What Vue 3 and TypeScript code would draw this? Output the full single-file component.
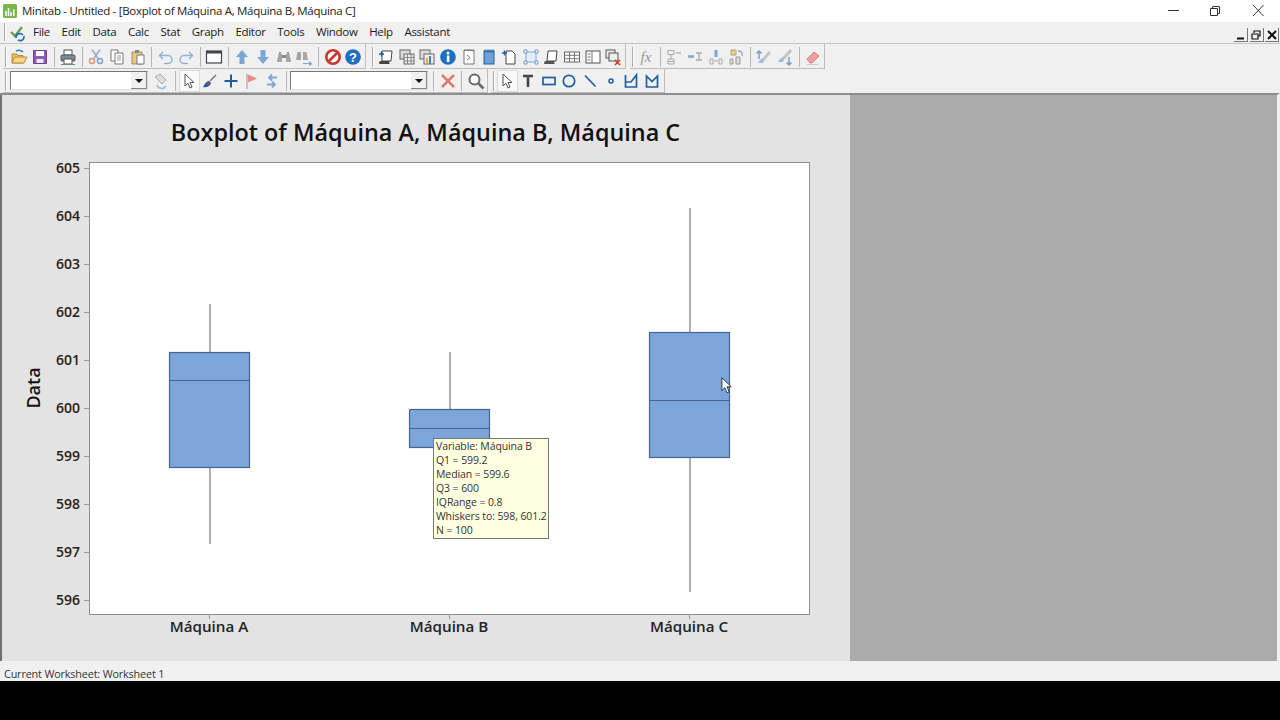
<template>
  <div class="app">
    <!-- Window title -->
    <header class="titlebar">
      <svg class="app-logo" width="14" height="14" viewBox="0 0 14 14">
        <rect width="14" height="14" rx="1.5" fill="#7ab648" />
        <path d="M3 12V7M5.5 12V4M8 12V8M10.8 12V5.5" stroke="#fff" stroke-width="1.5" />
      </svg>
      <span class="title-text">Minitab - Untitled - [Boxplot of Máquina A, Máquina B, Máquina C]</span>
      <div class="win-controls">
        <svg class="win-btn" viewBox="0 0 42 22"><path d="M15 10.500h11" stroke="#333" /></svg>
        <svg class="win-btn" viewBox="0 0 42 22"><path d="M15.500 8.500h7v7h-7zM17.500 8.500v-2h7v7h-2" fill="none" stroke="#333" /></svg>
        <svg class="win-btn" viewBox="0 0 42 22"><path d="M16 5l10.500 11M26.500 5L16 16" stroke="#333" /></svg>
      </div>
    </header>

    <!-- Menu bar -->
    <nav class="menubar">
      <span class="grip menu-grip"></span>
      <svg class="menu-logo" width="18" height="18" viewBox="0 0 18 18">
        <path d="M2 8l4 4 7-9" fill="none" stroke="#5d9e4e" stroke-width="2.2" />
        <path d="M7 14a4 4 0 0 1 7-3M15 12a4 4 0 0 1-6 4" fill="none" stroke="#2a6fb5" stroke-width="1.8" />
      </svg>
      <span v-for="m in menus" :key="m" class="menu-item">{{ m }}</span>
      <div class="mdi-controls">
        <span class="mdi-btn"><svg width="10" height="10" viewBox="0 0 10 10"><path d="M1 8.500h7" stroke="#111" stroke-width="2" /></svg></span>
        <span class="mdi-btn"><svg width="10" height="10" viewBox="0 0 10 10"><path d="M1 4h6v5H1zM3 3V1h6v5H7" fill="none" stroke="#111" stroke-width="1.200" /></svg></span>
        <span class="mdi-btn"><svg width="10" height="10" viewBox="0 0 10 10"><path d="M1 1l8 8M9 1L1 9" stroke="#111" stroke-width="2" /></svg></span>
      </div>
    </nav>

    <!-- Toolbars -->
    <div v-for="(row, r) in toolbars" :key="r" class="toolbar-row" :class="`row-${r}`">
      <div v-for="(group, g) in row" :key="g" class="tool-group">
        <span class="grip"></span>
        <template v-for="(item, i) in group" :key="i">
          <span v-if="item === '|'" class="sep"></span>
          <span v-else-if="item === 'combo'" class="combo"><span class="combo-arrow"></span></span>
          <span v-else class="tool" :class="{ pressed: item.endsWith('*') }">
            <svg width="18" height="18" viewBox="0 0 18 18" v-html="icons[item.replace('*', '')]"></svg>
          </span>
        </template>
      </div>
    </div>

    <!-- MDI workspace -->
    <main class="workspace">
      <section class="graph-pane">
        <svg class="chart" width="848" height="566" viewBox="2 95 848 566">
          <text class="chart-title" x="425.500" y="141" text-anchor="middle">Boxplot of Máquina A, Máquina B, Máquina C</text>
          <rect x="89.500" y="162.500" width="720" height="452" fill="#fff" stroke="#8d8d8d" />

          <g v-for="t in ticks" :key="t.label">
            <line x1="84" x2="90" :y1="t.y + 0.5" :y2="t.y + 0.5" stroke="#9a9a9a" />
            <text class="tick-label" x="80" :y="t.y + 5" text-anchor="end">{{ t.label }}</text>
          </g>
          <text class="axis-label" transform="translate(40 388) rotate(-90)" text-anchor="middle">Data</text>

          <g v-for="b in boxes" :key="b.name">
            <line :x1="b.x + 40" :x2="b.x + 40" :y1="b.whiskerTop" :y2="b.whiskerBottom" stroke="#737a84" stroke-width="1.200" />
            <rect :x="b.x - 0.5" :y="b.top + 0.5" width="80" :height="b.bottom - b.top" fill="#7ca5d9" stroke="#45658f" stroke-width="1.200" />
            <line :x1="b.x" :x2="b.x + 80" :y1="b.median + 0.5" :y2="b.median + 0.5" stroke="#45658f" stroke-width="1.200" />
            <line :x1="b.x + 39.5" :x2="b.x + 39.5" y1="614" y2="619" stroke="#9a9a9a" />
            <text class="cat-label" :x="b.x + 39" y="632" text-anchor="middle">{{ b.name }}</text>
          </g>
        </svg>

        <!-- Hover tooltip -->
        <div class="tooltip">
          <div v-for="l in tooltipLines" :key="l">{{ l }}</div>
        </div>

        <svg class="cursor" width="12" height="17" viewBox="0 0 14 20">
          <path d="M1 1v15l3.500-3.500 2.500 6 2.500-1-2.500-6h5z" fill="#fff" stroke="#222" />
        </svg>
      </section>
      <section class="mdi-empty"></section>
    </main>

    <footer class="statusbar">Current Worksheet: Worksheet 1</footer>
    <div class="blackout"></div>
  </div>
</template>

<script setup lang="ts">
const menus = ['File', 'Edit', 'Data', 'Calc', 'Stat', 'Graph', 'Editor', 'Tools', 'Window', 'Help', 'Assistant']

// '|' separator, 'combo' dropdown, trailing * means a pressed button
const toolbars: string[][][] = [
  [
    ['open', 'save', '|', 'print', '|', 'cut', 'copy', 'paste', '|', 'undo', 'redo', '|', 'window', '|', 'up', 'down', 'find', 'findnext', '|', 'stop', 'help'],
    ['session', 'grid', 'gridb', 'info', 'report', 'notebook', 'newdoc', 'nodes', 'scroll', 'table', 'panel', 'closeall'],
    ['fx', '|', 'tree1', 'tree2', 'tree3', 'tree4', '|', 'arrowa', 'arrowb', '|', 'eraser']
  ],
  [
    ['combo', 'refresh', '|', 'pointer*', 'brush', 'plus', 'flag', 'swap', '|', 'combo', '|', 'cross', '|', 'zoom'],
    ['pointer*', 'text', 'rect', 'circle', 'line', 'dot', 'poly', 'poly2']
  ]
]

const icons: Record<string, string> = {
  open: '<path d="M2 6h5l1 1.500h5V15H2z" fill="#f0c060" stroke="#b98a32"/><path d="M2 15l2.500-6H17l-3 6z" fill="#f4d58a" stroke="#b98a32"/><path d="M6 3c3-1.500 5-1 7 1" fill="none" stroke="#3a7fc0" stroke-width="1.500"/>',
  save: '<path d="M2.500 2.500h13v13h-13z" fill="#8f5fb5" stroke="#6f3f98"/><rect x="5" y="3" width="8" height="5" fill="#fff"/><rect x="5.500" y="11" width="7" height="4" fill="#efe6f5"/>',
  print: '<rect x="5" y="2" width="8" height="5" fill="#fff" stroke="#555"/><rect x="2" y="7" width="14" height="6" rx="1" fill="#7d8b94" stroke="#4e5a62"/><rect x="5" y="11" width="8" height="5" fill="#fff" stroke="#555"/><path d="M2 16.500h14" stroke="#5b9b6d"/>',
  cut: '<path d="M5 1.500l6 9M13 1.500l-6 9" stroke="#9ab0c8" stroke-width="1.600"/><circle cx="5" cy="13" r="2.500" fill="none" stroke="#d99a7a" stroke-width="1.500"/><circle cx="13" cy="13" r="2.500" fill="none" stroke="#7fa3c8" stroke-width="1.500"/>',
  copy: '<path d="M3 2h7v11H3z" fill="#fff" stroke="#777"/><path d="M7 5h8v11H7z" fill="#fff" stroke="#777"/><path d="M9 8h4M9 10h4M9 12h4" stroke="#999"/>',
  paste: '<path d="M3 4h10v12H3z" fill="#e7c88c" stroke="#a98b55"/><rect x="6" y="2" width="4" height="3" fill="#888"/><path d="M8 7h7v9H8z" fill="#fff" stroke="#777"/>',
  undo: '<path d="M6 4L2.500 7.500 6 11" fill="none" stroke="#8fb0d8" stroke-width="1.500"/><path d="M3 7.500h8a4 4 0 0 1 0 8H7" fill="none" stroke="#8fb0d8" stroke-width="1.500"/>',
  redo: '<path d="M12 4l3.500 3.500L12 11" fill="none" stroke="#8fb0d8" stroke-width="1.500"/><path d="M15 7.500H7a4 4 0 0 0 0 8h4" fill="none" stroke="#8fb0d8" stroke-width="1.500"/>',
  window: '<rect x="1.500" y="3" width="15" height="12" fill="#fff" stroke="#3f4650" stroke-width="1.200"/><rect x="1.500" y="3" width="15" height="2.500" fill="#3f4650"/>',
  up: '<path d="M9 2l6 7h-3.500v7h-5V9H3z" fill="#7ea6d3"/>',
  down: '<path d="M9 16l6-7h-3.500V2h-5v7H3z" fill="#7ea6d3"/>',
  find: '<path d="M2 14l1.500-8h3.500v8zM16 14l-1.500-8H11v8z" fill="#a5a5a5"/><rect x="7" y="7" width="4" height="3" fill="#888"/><path d="M4 4h2v2H4zM12 4h2v2h-2z" fill="#999"/>',
  findnext: '<path d="M1 12l1.500-8H6v8zM13 12l-1.500-8H8v8z" fill="#a5a5a5"/><path d="M8 15h6v-2l3.500 3-3.500 2v-2H8z" fill="#7ea6d3"/>',
  stop: '<circle cx="9" cy="9" r="6.700" fill="#fff" stroke="#c8392b" stroke-width="2.600"/><path d="M4.500 13.500l9-9" stroke="#c8392b" stroke-width="2.600"/>',
  help: '<circle cx="9" cy="9" r="7.800" fill="#1e6fc0"/><text x="9" y="13.500" font-size="13" font-weight="700" text-anchor="middle" fill="#fff" font-family="Liberation Sans, sans-serif">?</text>',
  session: '<path d="M5 3h10l-1 10H5z" fill="#fff" stroke="#444"/><path d="M2 15c0-2 2-2 3-2h8c-1 0-1 3 0 3H4c-1 0-2 0-2-1z" fill="#444"/><path d="M2 6h5M4.500 3.500v5" stroke="#1f5f9f" stroke-width="1.300"/>',
  grid: '<rect x="2" y="2" width="10" height="9" fill="#ddd" stroke="#666"/><rect x="6" y="6" width="10" height="10" fill="#eee" stroke="#666"/><path d="M6 9.500h10M6 13h10M9.500 6v10M13 6v10" stroke="#888"/>',
  gridb: '<rect x="2" y="2" width="10" height="9" fill="#ddd" stroke="#666"/><rect x="6" y="6" width="10" height="10" fill="#eee" stroke="#666"/><path d="M8 10h2v6H8z" fill="#e0a83c"/><path d="M11 8h2v8h-2z" fill="#3f7fbe"/>',
  info: '<circle cx="9" cy="9" r="7.800" fill="#1e6fc0"/><rect x="7.800" y="7.500" width="2.600" height="6.500" fill="#fff"/><circle cx="9" cy="5" r="1.500" fill="#fff"/>',
  report: '<path d="M4 2h10v14H4z" fill="#fff" stroke="#777"/><path d="M5 2v1M7 2v1M9 2v1M11 2v1M13 2v1" stroke="#444"/><path d="M7 7l3 2.500L7 12" fill="none" stroke="#777"/>',
  notebook: '<rect x="4" y="3" width="10" height="13" fill="#6f9fd6" stroke="#1f5f9f"/><path d="M5 1.500v3M7 1.500v3M9 1.500v3M11 1.500v3M13 1.500v3" stroke="#1f5f9f"/>',
  newdoc: '<path d="M5 3h6l3 3v10H5z" fill="#fff" stroke="#444"/><path d="M1 5h5M3.500 2.500v5" stroke="#1f5f9f" stroke-width="1.300"/>',
  nodes: '<rect x="4" y="4" width="10" height="10" fill="#e4eef8" stroke="#7ea6d3"/><path d="M2 2h3v3H2zM13 2h3v3h-3zM2 13h3v3H2zM13 13h3v3h-3z" fill="#fff" stroke="#6f97c8"/>',
  scroll: '<path d="M6 3h9l-1 10H5z" fill="#fff" stroke="#444"/><path d="M2 15c0-2 2-2 3-2h8c-1 0-1 3 0 3H4c-1 0-2 0-2-1z" fill="#555"/>',
  table: '<rect x="1.500" y="4" width="15" height="10" fill="#fff" stroke="#666"/><path d="M1.500 7.300h15M1.500 10.700h15M6.500 4v10M11.500 4v10" stroke="#777"/>',
  panel: '<rect x="2" y="3" width="14" height="12" fill="#fff" stroke="#555"/><path d="M8 3v12M3.500 6h3M3.500 9h3M3.500 12h3" stroke="#777"/>',
  closeall: '<rect x="2" y="2" width="9" height="8" fill="#eee" stroke="#555"/><rect x="5" y="5" width="9" height="8" fill="#eee" stroke="#555"/><path d="M11 12l5 5M16 12l-5 5" stroke="#d0352b" stroke-width="1.600"/>',
  fx: '<text x="9" y="14" font-size="15" font-style="italic" text-anchor="middle" fill="#999" font-family="Liberation Serif, serif">fx</text>',
  tree1: '<path d="M3 2.500h6v4H3zM3 11h6v5H3zM3 13.500h6M6 6.500V11" fill="none" stroke="#a9a9a9"/><path d="M11 5h5" stroke="#bcc8d6" stroke-width="2"/>',
  tree2: '<path d="M2 8.500h6" stroke="#7ea6d3" stroke-width="2.500"/><path d="M10 5h6M10 12h6M13 5v7" stroke="#aaa" stroke-width="1.300"/>',
  tree3: '<path d="M9 2v7" stroke="#7ea6d3" stroke-width="3"/><path d="M3 11h3v5H3zM12 11h3v5h-3zM7 13h4" fill="none" stroke="#aaa"/>',
  tree4: '<path d="M4 2h5v5H4z" fill="#e7cc95" stroke="#b9a06f"/><path d="M3 11h3v5H3zM9 9h4v7H9z" fill="#ddd" stroke="#999"/><path d="M11 3c3 0 5 1 4 5" fill="none" stroke="#7ea6d3" stroke-width="1.300"/>',
  arrowa: '<path d="M7 13l8-9" stroke="#c4c4c4" stroke-width="3"/><path d="M3 15c2-4 4-5 6-4l-1 4z" fill="#9fbcd8"/><path d="M4 3v8M1.500 5.500L4 3l2.500 2.500" fill="none" stroke="#6f9cc8" stroke-width="1.400"/>',
  arrowb: '<path d="M7 11l8-9" stroke="#c4c4c4" stroke-width="3"/><path d="M2 14c2-4 4-5 6-4l-1 4z" fill="#9fbcd8"/><path d="M13 9v8M10.500 14.500L13 17l2.500-2.500" fill="none" stroke="#6f9cc8" stroke-width="1.400"/>',
  eraser: '<path d="M3 11l7-7 5 4-7 7H6z" fill="#ee9f9f" stroke="#d98080"/><path d="M3 16.500h11" stroke="#ccc"/>',
  refresh: '<path d="M3 5l5-3 6 6-4 4z" fill="#ddd" stroke="#aaa"/><path d="M5 13a5 5 0 0 0 9 1" fill="none" stroke="#9fbcd8" stroke-width="1.800"/>',
  pointer: '<path d="M5 2v12l3-2.800 2 4.800 2-.9-2-4.600h4z" fill="#fff" stroke="#555"/>',
  brush: '<path d="M9 9l6-6" stroke="#777" stroke-width="1.500"/><path d="M2 15c2-4 4-6 6-6l2 2c-1 3-4 5-8 4z" fill="#1f5f9f"/><path d="M6 10l3 3" stroke="#d0352b" stroke-width="1.300"/>',
  plus: '<path d="M9 2.500v13M2.500 9h13" stroke="#1f5f9f" stroke-width="2"/>',
  flag: '<path d="M5 2v15" stroke="#b9a5a5" stroke-width="1.300"/><path d="M6 2.500l9 4-9 4z" fill="#ee8a8a"/>',
  swap: '<path d="M14 5.500H6M9 2.500L6 5.500l3 3M4 12.500h8M9 9.500l3 3-3 3" fill="none" stroke="#7ea6d3" stroke-width="1.800"/>',
  cross: '<path d="M3 3l12 12M15 3L3 15" stroke="#e07b72" stroke-width="2.600"/>',
  zoom: '<circle cx="7.500" cy="7.500" r="5" fill="#fff" stroke="#6a6a6a" stroke-width="2"/><path d="M11.500 11.500l5 5" stroke="#6a6a6a" stroke-width="2.600"/>',
  text: '<path d="M4 4h10M9 4v11" fill="none" stroke="#444" stroke-width="2.600"/>',
  rect: '<rect x="3" y="5.500" width="12" height="7" fill="none" stroke="#1f5f9f" stroke-width="1.700"/>',
  circle: '<circle cx="9" cy="9" r="5.700" fill="none" stroke="#1f5f9f" stroke-width="1.700"/>',
  line: '<path d="M4 3.500l10.500 11" stroke="#1f5f9f" stroke-width="1.700"/>',
  dot: '<circle cx="9" cy="9" r="2" fill="none" stroke="#1f5f9f" stroke-width="1.500"/>',
  poly: '<path d="M3.500 3v12h11V3L9 10H3.500" fill="none" stroke="#1f5f9f" stroke-width="1.700"/>',
  poly2: '<path d="M3.500 4v11h11V4L9 9.500z" fill="none" stroke="#1f5f9f" stroke-width="1.700"/>'
}

const ticks = [605, 604, 603, 602, 601, 600, 599, 598, 597, 596].map((label, i) => ({
  label,
  y: 168 + i * 48
}))

const boxes = [
  { name: 'Máquina A', x: 170, top: 352, bottom: 467, median: 380, whiskerTop: 304, whiskerBottom: 544 },
  { name: 'Máquina B', x: 410, top: 409, bottom: 447, median: 428, whiskerTop: 352, whiskerBottom: 500 },
  { name: 'Máquina C', x: 650, top: 332, bottom: 457, median: 400, whiskerTop: 208, whiskerBottom: 592 }
]

const tooltipLines = [
  'Variable: Máquina B',
  'Q1 = 599.2',
  'Median = 599.6',
  'Q3 = 600',
  'IQRange = 0.8',
  'Whiskers to: 598, 601.2',
  'N = 100'
]
</script>

<style>
html,
body {
  margin: 0;
  background: #000;
}
</style>

<style scoped>
.app {
  width: 1280px;
  height: 720px;
  display: flex;
  flex-direction: column;
  overflow: hidden;
  font-family: 'Open Sans', 'Noto Sans', sans-serif;
  color: #1a1a1a;
  background: #f0f0f0;
}

.titlebar {
  height: 22px;
  flex: none;
  display: flex;
  align-items: center;
  padding-left: 3px;
  background: #fff;
}

.app-logo {
  margin-right: 5px;
}

.title-text {
  font-size: 11.5px;
  letter-spacing: -0.3px;
  margin-top: -1px;
  color: #222;
}

.win-controls {
  margin-left: auto;
  display: flex;
  margin-right: 1px;
}

.win-btn {
  width: 42px;
  height: 22px;
}

.menubar {
  height: 22px;
  flex: none;
  display: flex;
  align-items: center;
  padding-left: 4px;
  box-sizing: border-box;
  border-bottom: 1px solid #c4c4c4;
  font-size: 11.5px;
  letter-spacing: -0.3px;
}

.menu-logo {
  margin: 0 6px 0 3px;
}

.menu-item {
  margin: -2px 11.6px 0 0;
}

.mdi-controls {
  margin: 5px 1px 0 auto;
  display: flex;
  gap: 1.500px;
}

.mdi-btn {
  width: 14px;
  height: 14px;
  display: flex;
  align-items: center;
  justify-content: center;
  background: #f0f0f0;
  border-right: 1px solid #777;
  border-bottom: 1px solid #777;
  box-sizing: border-box;
}

.toolbar-row {
  flex: none;
  display: flex;
  align-items: stretch;
  background: #f0f0f0;
  padding-left: 3px;
}

.row-0 {
  height: 25px;
}

.row-1 {
  height: 24px;
}

.tool-group {
  display: flex;
  align-items: center;
  padding-right: 1px;
  border-right: 1px solid #bdbdbd;
  border-bottom: 1px solid #bdbdbd;
}

.row-0 .tool-group {
  padding-top: 1px;
}

.tool-group + .tool-group {
  margin-left: 4px;
}

.row-1 .tool-group + .tool-group {
  margin-left: 3px;
}

.grip {
  width: 2px;
  height: 20px;
  margin: 0 2px;
  background: #fdfdfd;
  border-left: 1px solid #aaa;
  box-sizing: border-box;
  flex: none;
}

.menu-grip {
  height: 18px;
  margin: -2px 0 0;
}

.tool {
  width: 20.7px;
  height: 22px;
  display: flex;
  align-items: center;
  justify-content: center;
  flex: none;
}

.tool.pressed {
  background: #f9f9f9;
  box-shadow: inset 0 0 0 1px #dcdcdc;
}

.sep {
  width: 1px;
  height: 20px;
  margin: 0 3.2px;
  background: #b5b5b5;
  flex: none;
}

.combo {
  width: 138px;
  height: 19px;
  position: relative;
  margin: 0 3px 0 1px;
  background: #fff;
  border: 1px solid;
  border-color: #777 #ddd #ddd #777;
  box-sizing: border-box;
  flex: none;
}

.sep + .combo {
  margin: 0 2px 0 0;
}

.combo-arrow {
  position: absolute;
  right: 0;
  top: 0;
  bottom: 0;
  width: 16px;
  background: #f0f0f0;
  border-right: 1px solid #888;
  border-bottom: 1px solid #888;
  box-sizing: border-box;
}

.combo-arrow::after {
  content: '';
  position: absolute;
  left: 4px;
  top: 7px;
  border: 4px solid transparent;
  border-top-color: #111;
  border-bottom-width: 0;
}

.workspace {
  height: 566px;
  flex: none;
  display: flex;
  border-top: 2px solid #8c8c8c;
  border-right: 3px solid #f0f0f0;
}

.graph-pane {
  width: 848px;
  position: relative;
  flex: none;
  background: #e3e3e3;
  border-left: 2px solid #707070;
}

.chart {
  display: block;
}

.chart-title {
  font-size: 23.4px;
  font-weight: 600;
  fill: #111;
}

.tick-label {
  font-size: 14px;
  font-weight: 600;
  fill: #222;
}

.axis-label {
  font-size: 18px;
  font-weight: 600;
  fill: #111;
}

.cat-label {
  font-size: 15.2px;
  font-weight: 600;
  fill: #222;
}

.tooltip {
  position: absolute;
  left: 431px;
  top: 343px;
  width: 116px;
  height: 101px;
  padding: 0 0 0 2px;
  box-sizing: border-box;
  font-size: 10.5px;
  line-height: 14px;
  letter-spacing: -0.1px;
  white-space: nowrap;
  background: #ffffe1;
  border: 1px solid #767676;
  color: #333;
}

.cursor {
  position: absolute;
  left: 719px;
  top: 282px;
}

.mdi-empty {
  flex: 1;
  background: #ababab;
}

.statusbar {
  height: 20px;
  flex: none;
  padding-left: 4px;
  font-size: 10.8px;
  letter-spacing: -0.15px;
  line-height: 25px;
  color: #333;
  background: #f0f0f0;
}

.blackout {
  flex: 1;
  background: #000;
}
</style>
